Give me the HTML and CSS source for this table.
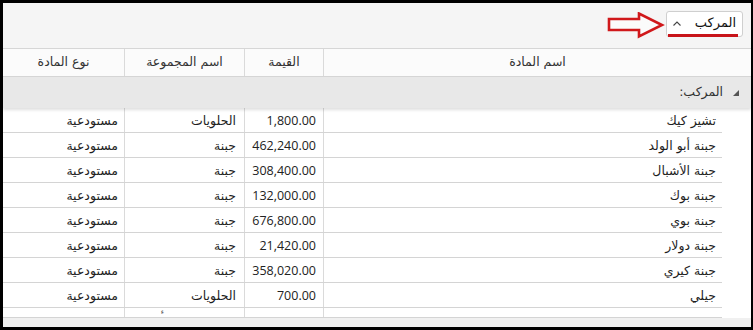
FILE: index.html
```html
<!DOCTYPE html>
<html lang="ar">
<head>
<meta charset="utf-8">
<link rel="stylesheet" href="styles.css">
</head>
<body>
<div class="frame">
  <div class="toolbar">
    <svg class="pointer" width="58" height="28" viewBox="0 0 58 28">
      <path d="M2,7 L32,7 L32,1.5 L55,13 L32,24.5 L32,18 L2,18 Z" fill="#fbfbfb" stroke="#d0181b" stroke-width="2.6" stroke-linejoin="miter"/>
    </svg>
    <div class="combo">
      <svg class="caret" width="8" height="5" viewBox="0 0 8 5"><path d="M0.5,4.5 L4,1 L7.5,4.5" fill="none" stroke="#444" stroke-width="1.1"/></svg>
      <span class="combo-text">المركب</span>
    </div>
  </div>
  <div class="grid">
    <div class="row head">
      <div class="cell c-name">اسم المادة</div>
      <div class="cell c-val">القيمة</div>
      <div class="cell c-grp">اسم المجموعة</div>
      <div class="cell c-type">نوع المادة</div>
    </div>
    <div class="group-row">
      <svg class="glyph" width="6" height="6" viewBox="0 0 6 6"><polygon points="6,0 6,6 0,6" fill="#555"/></svg>
      <span>المركب:</span>
    </div>
    <div class="rows">
      <div class="row data"><div class="cell c-name">تشيز كيك</div><div class="cell c-val num">1,800.00</div><div class="cell c-grp">الحلويات</div><div class="cell c-type">مستودعية</div></div>
      <div class="row data"><div class="cell c-name">جبنة أبو الولد</div><div class="cell c-val num">462,240.00</div><div class="cell c-grp">جبنة</div><div class="cell c-type">مستودعية</div></div>
      <div class="row data"><div class="cell c-name">جبنة الأشبال</div><div class="cell c-val num">308,400.00</div><div class="cell c-grp">جبنة</div><div class="cell c-type">مستودعية</div></div>
      <div class="row data"><div class="cell c-name">جبنة بوك</div><div class="cell c-val num">132,000.00</div><div class="cell c-grp">جبنة</div><div class="cell c-type">مستودعية</div></div>
      <div class="row data"><div class="cell c-name">جبنة بوي</div><div class="cell c-val num">676,800.00</div><div class="cell c-grp">جبنة</div><div class="cell c-type">مستودعية</div></div>
      <div class="row data"><div class="cell c-name">جبنة دولار</div><div class="cell c-val num">21,420.00</div><div class="cell c-grp">جبنة</div><div class="cell c-type">مستودعية</div></div>
      <div class="row data"><div class="cell c-name">جبنة كيري</div><div class="cell c-val num">358,020.00</div><div class="cell c-grp">جبنة</div><div class="cell c-type">مستودعية</div></div>
      <div class="row data"><div class="cell c-name">جيلي</div><div class="cell c-val num">700.00</div><div class="cell c-grp">الحلويات</div><div class="cell c-type">مستودعية</div></div>
      <div class="row data partial"><div class="cell c-name"></div><div class="cell c-val"></div><div class="cell c-grp"><span class="mark">ء</span></div><div class="cell c-type"></div></div>
    </div>
    <div class="footer"></div>
  </div>
</div>
</body>
</html>
```

FILE: styles.css
```css
* { box-sizing: border-box; margin: 0; padding: 0; }
html, body { width: 753px; height: 330px; background: #000; overflow: hidden; }
body { font-family: "Noto Sans", "DejaVu Sans", sans-serif; color: #222; }

.frame {
  width: 753px;
  height: 330px;
  border-style: solid;
  border-color: #000;
  border-width: 3px 2px 3px 3px;
  background: #fff;
  display: flex;
  flex-direction: column;
}

.toolbar {
  height: 45px;
  flex: none;
  background: #f5f5f5;
  display: flex;
  justify-content: flex-end;
  align-items: flex-start;
  padding: 8px 8px 0 0;
  gap: 1px;
}
.pointer { margin-top: 1px; }

.combo {
  position: relative;
  width: 77px;
  height: 26px;
  background: #fff;
  border: 1px solid #cfcfcf;
  border-radius: 3px;
  display: flex;
  align-items: center;
  justify-content: space-between;
  padding: 0 6px 0 6px;
}
.combo::after {
  content: "";
  position: absolute;
  left: 1px;
  right: 4px;
  bottom: -1px;
  height: 3px;
  background: #c8141a;
}
.caret { margin-top: -2px; }
.combo-text {
  direction: rtl;
  font-family: "DejaVu Sans", sans-serif;
  font-size: 13px;
  color: #111;
  margin-top: -3px;
}

.grid {
  flex: 1;
  display: flex;
  flex-direction: column;
  direction: rtl;
  overflow: hidden;
}

.row {
  display: grid;
  grid-template-columns: 1fr 79px 120px 121px;
}
.cell {
  border-left: 1px solid #dadada;
  display: flex;
  align-items: center;
  white-space: nowrap;
  overflow: hidden;
}
.cell.c-type { border-left: none; }

.head {
  height: 29px;
  flex: none;
  border-top: 1px solid #d6d6d6;
  border-bottom: 1px solid #d6d6d6;
  background: #fbfbfb;
}
.head .cell {
  justify-content: center;
  font-family: "DejaVu Sans", sans-serif;
  font-size: 12.5px;
  color: #333;
  padding-bottom: 2px;
}

.group-row {
  height: 31px;
  flex: none;
  background: #e8e8e8;
  box-shadow: 0 2px 3px rgba(0, 0, 0, 0.13);
  position: relative;
  z-index: 1;
  display: flex;
  align-items: center;
  padding-right: 12px;
  gap: 10px;
  font-family: "DejaVu Sans", sans-serif;
  font-size: 12.5px;
  color: #333;
}
.group-row span { margin-top: -2px; }

.rows {
  flex: none;
  margin-right: 29px;
}
.data {
  height: 25px;
  border-bottom: 1px solid #d4d4d4;
}
.data .cell {
  justify-content: flex-start;
  padding-right: 6px;
  font-family: "DejaVu Sans", sans-serif;
  font-size: 12.5px;
  color: #1e1e1e;
}
.data .cell.num {
  font-family: "Open Sans", "Noto Sans", sans-serif;
  font-size: 12.5px;
  color: #222;
  padding-right: 7px;
}
.data .c-grp { padding-right: 8px; }
.data.partial { height: 10px; }
.data.partial .cell { align-items: flex-start; overflow: visible; }
.mark {
  font-size: 7px;
  line-height: 8px;
  color: #444;
  padding-right: 72px;
}

.footer {
  flex: 1;
  background: #f0f0f0;
}
```
